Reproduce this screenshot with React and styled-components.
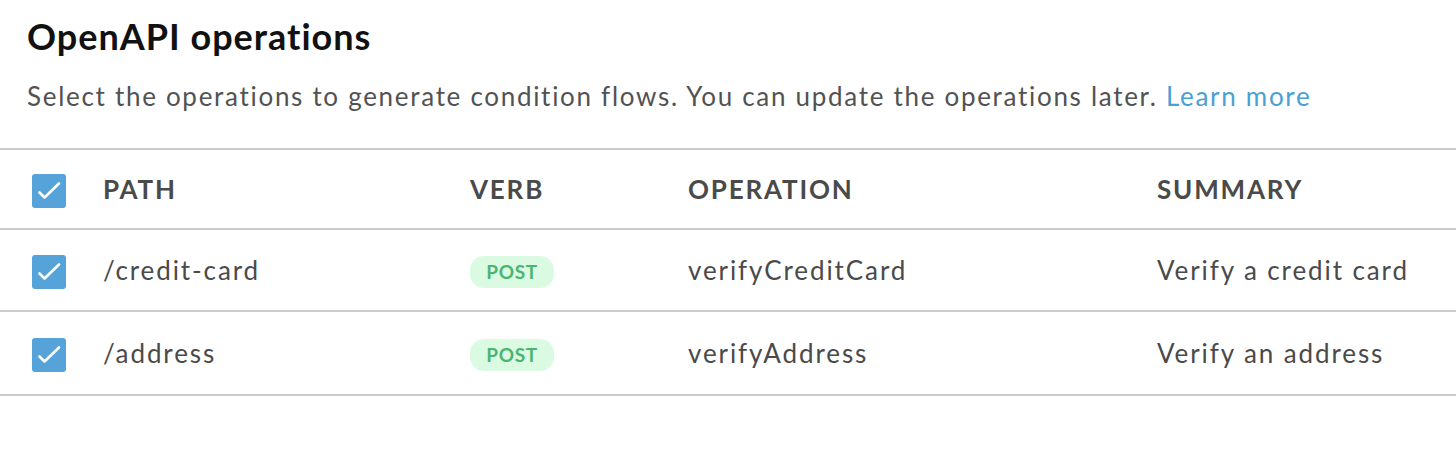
import React from "react";
import styled, { createGlobalStyle } from "styled-components";

const GlobalStyle = createGlobalStyle`
  body {
    margin: 0;
    background: #ffffff;
    font-family: Lato, "Open Sans", sans-serif;
  }
`;

const Page = styled.div`
  width: 1456px;
  height: 462px;
  background: #fff;
  overflow: hidden;
`;

const Header = styled.div`
  padding: 14px 27px 0 27px;
  height: 148px;
  box-sizing: border-box;
`;

const Title = styled.h1`
  margin: 0;
  font-size: 36px;
  font-weight: 700;
  color: #111;
  line-height: 44px;
  letter-spacing: 1px;
`;

const Description = styled.p`
  margin: 21px 0 0;
  font-size: 26px;
  color: #525252;
  line-height: 34px;
  letter-spacing: 1.7px;
`;

const LearnMore = styled.a`
  color: #4a9fd5;
  text-decoration: none;
`;

const Table = styled.div`
  border-top: 2px solid #cbcbcb;
`;

const Row = styled.div`
  display: grid;
  grid-template-columns: 103px 367px 218px 469px 1fr;
  align-items: center;
  height: ${(p) => p.h || 80}px;
  border-bottom: 2px solid #cbcbcb;
`;

const CheckCell = styled.div`
  padding-left: 32px;
  margin-top: 4px;
  display: flex;
  align-items: center;
`;

const Box = styled.span`
  width: 34px;
  height: 34px;
  border-radius: 3px;
  background: #55a3d8;
  display: flex;
  align-items: center;
  justify-content: center;
`;

const HeadCell = styled.div`
  font-size: 26px;
  font-weight: 700;
  color: #4a4a4a;
  letter-spacing: 1.8px;
`;

const Cell = styled.div`
  font-size: 26px;
  color: #4a4a4a;
  letter-spacing: 1.9px;
`;

const Badge = styled.span`
  display: inline-flex;
  align-items: center;
  justify-content: center;
  width: 84px;
  height: 32px;
  border-radius: 14px;
  background: #dafbe2;
  color: #4cb472;
  font-size: 19px;
  font-weight: 700;
  letter-spacing: 0.6px;
  margin-top: 3px;
`;

const Checkbox = () => (
  <CheckCell>
    <Box>
      <svg width="34" height="34" viewBox="0 0 34 34">
        <path
          d="M7.5 18.5 L12.5 23.5 L27 9.5"
          fill="none"
          stroke="#fff"
          strokeWidth="2.6"
          strokeLinecap="round"
          strokeLinejoin="round"
        />
      </svg>
    </Box>
  </CheckCell>
);

const operations = [
  { path: "/credit-card", verb: "POST", op: "verifyCreditCard", summary: "Verify a credit card", h: 80 },
  { path: "/address", verb: "POST", op: "verifyAddress", summary: "Verify an address", h: 82 },
];

export default function App() {
  return (
    <Page>
      <GlobalStyle />
      <Header>
        <Title>OpenAPI operations</Title>
        <Description>
          Select the operations to generate condition flows. You can update the
          operations later. <LearnMore href="#">Learn more</LearnMore>
        </Description>
      </Header>
      <Table>
        <Row h={78}>
          <Checkbox />
          <HeadCell>PATH</HeadCell>
          <HeadCell>VERB</HeadCell>
          <HeadCell>OPERATION</HeadCell>
          <HeadCell>SUMMARY</HeadCell>
        </Row>
        {operations.map((o) => (
          <Row key={o.op} h={o.h}>
            <Checkbox />
            <Cell>{o.path}</Cell>
            <Cell>
              <Badge>{o.verb}</Badge>
            </Cell>
            <Cell>{o.op}</Cell>
            <Cell>{o.summary}</Cell>
          </Row>
        ))}
      </Table>
    </Page>
  );
}
